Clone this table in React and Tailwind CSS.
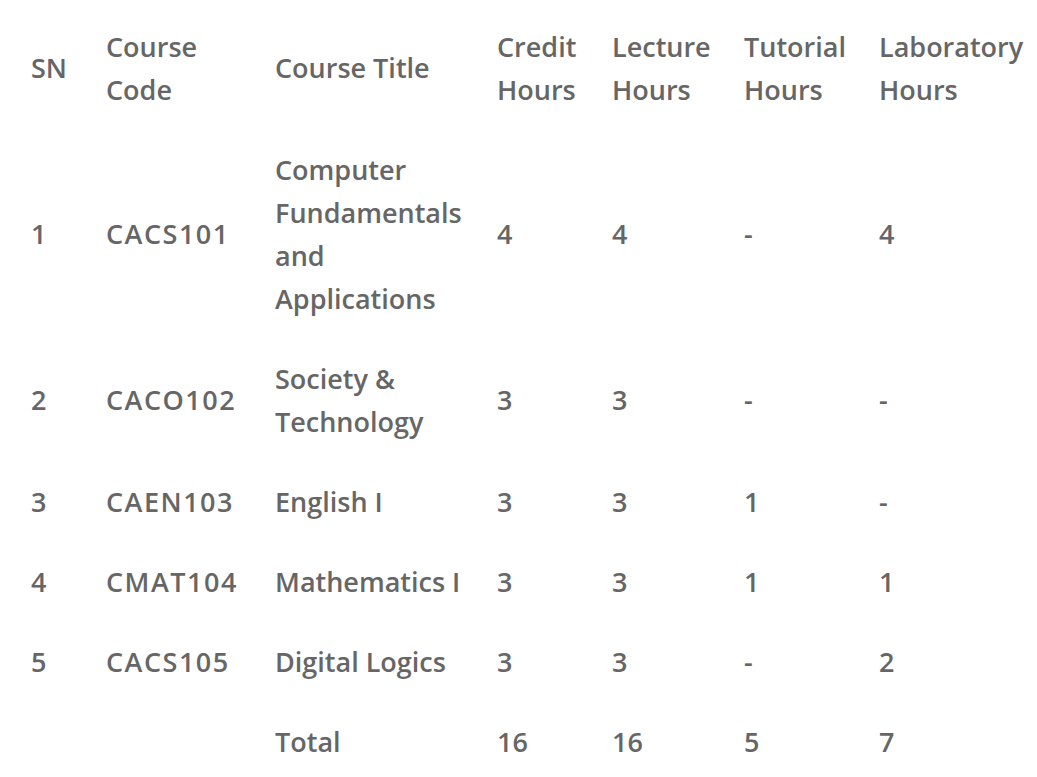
const rows = [
  { sn: "1", code: "CACS101", title: "Computer Fundamentals and Applications", credit: "4", lecture: "4", tutorial: "-", lab: "4" },
  { sn: "2", code: "CACO102", title: "Society & Technology", credit: "3", lecture: "3", tutorial: "-", lab: "-" },
  { sn: "3", code: "CAEN103", title: "English I", credit: "3", lecture: "3", tutorial: "1", lab: "-" },
  { sn: "4", code: "CMAT104", title: "Mathematics I", credit: "3", lecture: "3", tutorial: "1", lab: "1" },
  { sn: "5", code: "CACS105", title: "Digital Logics", credit: "3", lecture: "3", tutorial: "-", lab: "2" },
  { sn: "", code: "", title: "Total", credit: "16", lecture: "16", tutorial: "5", lab: "7" },
];

const cell = "py-[18.5px] pr-2 align-middle text-left font-semibold";

const App = () => {
  return (
    <div className="min-h-screen bg-white pl-[31px] pt-[6px] text-[#666666] font-['Open_Sans',sans-serif] text-[27px] leading-[43px]">
      <table className="table-fixed border-collapse w-[1006px]">
        <colgroup>
          <col className="w-[75px]" />
          <col className="w-[169px]" />
          <col className="w-[222px]" />
          <col className="w-[115px]" />
          <col className="w-[132px]" />
          <col className="w-[135px]" />
          <col />
        </colgroup>
        <thead>
          <tr>
            <th className={cell}>SN</th>
            <th className={cell + " pr-[40px]"}>Course Code</th>
            <th className={cell + " pr-[12px]"}>Course Title</th>
            <th className={cell}>Credit Hours</th>
            <th className={cell}>Lecture Hours</th>
            <th className={cell}>Tutorial Hours</th>
            <th className={cell}>Laboratory Hours</th>
          </tr>
        </thead>
        <tbody>
          {rows.map((r, i) => (
            <tr key={i}>
              <td className={cell}>{r.sn}</td>
              <td className={cell + " pr-[20px] tracking-[1.5px]"}>{r.code}</td>
              <td className={cell + " pr-[12px]"}>{r.title}</td>
              <td className={cell}>{r.credit}</td>
              <td className={cell}>{r.lecture}</td>
              <td className={cell}>{r.tutorial}</td>
              <td className={cell}>{r.lab}</td>
            </tr>
          ))}
        </tbody>
      </table>
    </div>
  );
};

export default App;
